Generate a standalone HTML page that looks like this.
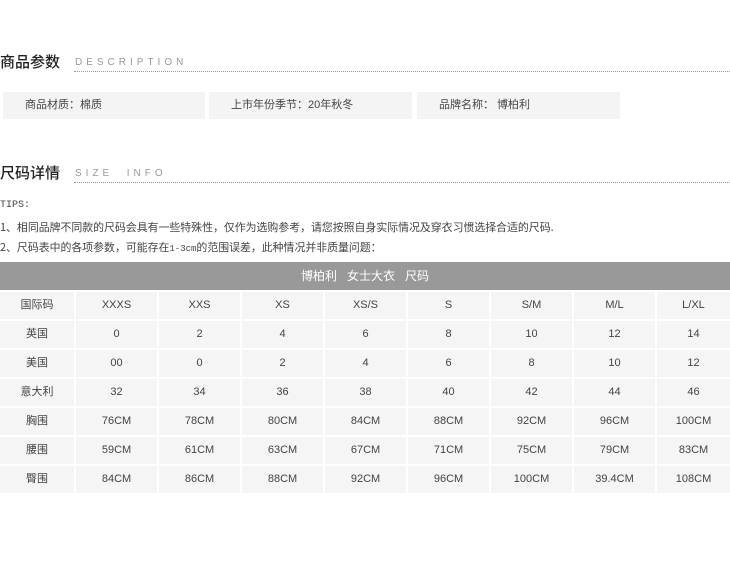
<!DOCTYPE html>
<html><head><meta charset="utf-8"><style>
*{margin:0;padding:0;box-sizing:border-box}
body{width:730px;height:579px;background:#fff;position:relative;font-family:"Liberation Sans","Noto Sans CJK SC",sans-serif;color:#333;overflow:hidden}
.a{position:absolute}
.h{font-size:15px;color:#222;font-weight:500}
.en{font-size:10px;letter-spacing:4px;color:#999}
.dot{border-bottom:1px dotted #999;height:0}
.box{background:#f4f4f4;height:27px;top:92px;font-size:11px;line-height:27px;color:#444}
.t{font-size:10.9px;color:#444;font-family:"Noto Sans CJK SC",sans-serif;white-space:nowrap}
.c{position:absolute;background:#f5f5f5;height:27px;line-height:27px;text-align:center;font-size:11px;color:#444}
.hd{position:absolute;left:0;top:262px;width:730px;height:28px;background:#999;color:#fff;text-align:center;line-height:28px;font-size:12px}
</style></head><body>
<div class="a h" style="left:0;top:51px">商品参数</div>
<div class="a en" style="left:75px;top:57px">DESCRIPTION</div>
<div class="a dot" style="left:74px;top:71px;width:656px"></div>
<div class="a box" style="left:3px;width:202px;padding-left:22px">商品材质：棉质</div>
<div class="a box" style="left:209px;width:203px;padding-left:22px">上市年份季节：20年秋冬</div>
<div class="a box" style="left:417px;width:203px;padding-left:22px">品牌名称： 博柏利</div>
<div class="a h" style="left:0;top:162px">尺码详情</div>
<div class="a en" style="left:75px;top:168px">SIZE&nbsp;&nbsp;INFO</div>
<div class="a dot" style="left:74px;top:182px;width:656px"></div>
<div class="a t" style="left:0;top:200px;font-family:'Liberation Mono',monospace;font-size:10px">TIPS:</div>
<div class="a t" style="left:0;top:219px">1、相同品牌不同款的尺码会具有一些特殊性，仅作为选购参考，请您按照自身实际情况及穿衣习惯选择合适的尺码.</div>
<div class="a t" style="left:0;top:239px">2、尺码表中的各项参数，可能存在<span style="font-family:'Liberation Mono',monospace;font-size:9px">1-3cm</span>的范围误差，此种情况并非质量问题：</div>
<div class="hd">博柏利&nbsp;&nbsp;&nbsp;女士大衣&nbsp;&nbsp;&nbsp;尺码</div>
<div id="g"></div>
<script>
var xs=[[0,74],[76,157],[159,240],[242,323],[325,406],[408,489],[491,572],[574,655],[657,730]];
var rows=[["国际码","XXXS","XXS","XS","XS/S","S","S/M","M/L","L/XL"],
["英国","0","2","4","6","8","10","12","14"],
["美国","00","0","2","4","6","8","10","12"],
["意大利","32","34","36","38","40","42","44","46"],
["胸围","76CM","78CM","80CM","84CM","88CM","92CM","96CM","100CM"],
["腰围","59CM","61CM","63CM","67CM","71CM","75CM","79CM","83CM"],
["臀围","84CM","86CM","88CM","92CM","96CM","100CM","39.4CM","108CM"]];
var h="";
rows.forEach(function(r,i){r.forEach(function(v,j){h+='<div class="c" style="left:'+xs[j][0]+'px;width:'+(xs[j][1]-xs[j][0])+'px;top:'+(292+29*i)+'px">'+v+'</div>';});});
document.getElementById("g").innerHTML=h;
</script>
</body></html>
